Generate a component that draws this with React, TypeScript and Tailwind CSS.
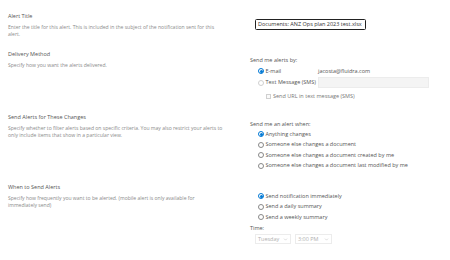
import { ChevronDown } from 'lucide-react';

function Radio({ checked, disabled }: { checked?: boolean; disabled?: boolean }) {
  if (checked) {
    return (
      <span className="w-[6px] h-[6px] rounded-full border border-[#0078d4] flex items-center justify-center flex-shrink-0">
        <span className="w-[3px] h-[3px] rounded-full bg-[#0078d4]" />
      </span>
    );
  }
  return (
    <span
      className={
        disabled
          ? 'w-[6px] h-[6px] rounded-full border border-[#d0d0d0] flex-shrink-0'
          : 'w-[6px] h-[6px] rounded-full border border-[#888] flex-shrink-0'
      }
    />
  );
}

function Option({ label, checked }: { label: string; checked?: boolean }) {
  return (
    <div className="flex items-center h-[10.5px] pl-[8px] gap-[1.5px]">
      <Radio checked={checked} />
      <span>{label}</span>
    </div>
  );
}

function Section({
  title,
  lines,
  height,
  children,
}: {
  title: string;
  lines: string[];
  height?: string;
  children: React.ReactNode;
}) {
  return (
    <div className={'flex ' + (height ?? '')}>
      <div className="w-[242px] flex-shrink-0">
        <div className="text-[5.5px] leading-[7px] text-[#555]">{title}</div>
        <div className="mt-[4px] text-[5.05px] leading-[7px] text-[#8a8a8a] whitespace-nowrap">
          {lines.map((line) => (
            <div key={line}>{line}</div>
          ))}
        </div>
      </div>
      <div className="flex-1 text-[5.5px] leading-[7px] text-[#555]">{children}</div>
    </div>
  );
}

export default function App() {
  return (
    <div className="w-[450px] h-[260px] bg-white px-[8px] pt-[12.5px] font-['Open_Sans',sans-serif] overflow-hidden">
      <Section
        title="Alert Title"
        lines={[
          'Enter the title for this alert. This is included in the subject of the notification sent for this',
          'alert.',
        ]}
        height="h-[38px]"
      >
        <div className="mt-[6.5px] ml-[5px] w-[111px] h-[10.5px] border border-[#222] rounded-[1.5px] flex items-center px-[2px] text-[#333]">
          Documents: ANZ Ops plan 2023 test.xlsx
        </div>
      </Section>

      <Section
        title="Delivery Method"
        lines={['Specify how you want the alerts delivered.']}
        height="h-[63px]"
      >
        <div className="mt-[6px]">Send me alerts by:</div>
        <div className="mt-[2px] flex items-center h-[11px] pl-[8px]">
          <div className="w-[60px] flex items-center gap-[1.5px]">
            <Radio checked />
            <span>E-mail</span>
          </div>
          <span>jacosta@fluidra.com</span>
        </div>
        <div className="mt-[0.5px] flex items-center h-[11px] pl-[8px]">
          <div className="w-[60px] flex items-center gap-[1.5px]">
            <Radio disabled />
            <span>Text Message (SMS)</span>
          </div>
          <div className="w-[111px] h-[11px] bg-[#f4f4f4] border border-[#ececec]" />
        </div>
        <div className="mt-[2.5px] flex items-center h-[11px] pl-[16px] gap-[2px] text-[#777]">
          <span className="w-[5px] h-[5px] border border-[#d0d0d0] bg-[#fafafa] flex-shrink-0" />
          <span>Send URL in text message (SMS)</span>
        </div>
      </Section>

      <Section
        title="Send Alerts for These Changes"
        lines={[
          'Specify whether to filter alerts based on specific criteria. You may also restrict your alerts to',
          'only include items that show in a particular view.',
        ]}
        height="h-[70px]"
      >
        <div className="mt-[7px]">Send me an alert when:</div>
        <div className="mt-[1.25px]">
          <Option label="Anything changes" checked />
          <Option label="Someone else changes a document" />
          <Option label="Someone else changes a document created by me" />
          <Option label="Someone else changes a document last modified by me" />
        </div>
      </Section>

      <Section
        title="When to Send Alerts"
        lines={[
          'Specify how frequently you want to be alerted. (mobile alert is only available for',
          'immediately send)',
        ]}
      >
        <div className="mt-[7.25px]">
          <Option label="Send notification immediately" checked />
          <Option label="Send a daily summary" />
          <Option label="Send a weekly summary" />
        </div>
        <div className="mt-[2.25px]">Time:</div>
        <div className="mt-[2.5px] ml-[5px] flex gap-[4px] text-[#b0b0b0]">
          <div className="w-[36px] h-[10px] border border-[#ececec] flex items-center justify-between px-[2px]">
            <span>Tuesday</span>
            <ChevronDown className="w-[5px] h-[5px]" strokeWidth={2} />
          </div>
          <div className="w-[37px] h-[10px] border border-[#ececec] flex items-center justify-between px-[2px]">
            <span>3:00 PM</span>
            <ChevronDown className="w-[5px] h-[5px]" strokeWidth={2} />
          </div>
        </div>
      </Section>
    </div>
  );
}
